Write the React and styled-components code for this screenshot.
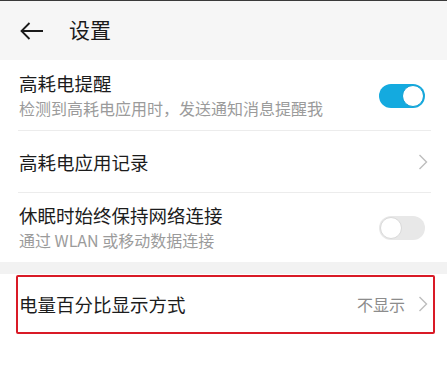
import React from 'react';
import styled, { createGlobalStyle } from 'styled-components';

const GlobalStyle = createGlobalStyle`
  html, body {
    margin: 0;
    padding: 0;
    background: #ffffff;
  }

  body {
    font-family: 'Noto Sans CJK SC', 'Noto Sans', sans-serif;
    -webkit-font-smoothing: antialiased;
  }
`;

const StyledPage = styled.div`
  position: relative;
  width: 447px;
  height: 382px;
  overflow: hidden;
  background: #ffffff;
  border-top: 1px solid #3a3a3a;
  box-sizing: border-box;
`;

const StyledHeader = styled.header`
  display: flex;
  align-items: center;
  height: 59px;
  padding-left: 20px;
  gap: 25px;
  background: #f6f6f6;

  h1 {
    margin: 0;
    font-size: 21px;
    font-weight: 400;
    color: #1a1a1a;
    line-height: 1;
    padding-bottom: 2px;
  }
`;

const StyledRow = styled.div`
  display: flex;
  align-items: center;
  justify-content: space-between;
  height: ${props => props.height}px;
  padding: 0 19px 0 19px;
  box-sizing: border-box;
  position: relative;

  &::after {
    content: '';
    display: ${props => (props.divider ? 'block' : 'none')};
    position: absolute;
    left: 18px;
    right: 16px;
    bottom: 0;
    height: 1px;
    background: #ececec;
  }
`;

const StyledText = styled.div`
  display: flex;
  flex-direction: column;
  gap: 5px;

  .title {
    font-size: 18.5px;
    line-height: 21px;
    color: #1c1c1c;
  }

  .sub {
    font-size: 16px;
    line-height: 19px;
    color: #9b9b9b;
  }
`;

const StyledSide = styled.div`
  display: flex;
  align-items: center;
  gap: 13px;
  font-size: 16px;
  color: #8c8c8c;
`;

const StyledToggle = styled.div`
  position: relative;
  width: 46px;
  height: 24px;
  margin-right: 3px;
  border-radius: 12px;
  background: ${props => (props.on ? '#14aadf' : '#e8e8e8')};

  &::after {
    content: '';
    position: absolute;
    top: 1px;
    left: ${props => (props.on ? '23px' : '1px')};
    width: 20px;
    height: 20px;
    border-radius: 50%;
    background: #ffffff;
    border: 1px solid ${props => (props.on ? '#0f9fd2' : '#d9d9d9')};
  }
`;

const StyledGap = styled.div`
  height: 12px;
  background: #f2f2f2;
`;

const StyledMark = styled.div`
  position: absolute;
  left: 16px;
  top: 274px;
  width: 419px;
  height: 59px;
  border: 2px solid #d91a26;
  border-radius: 2px;
  box-sizing: border-box;
  pointer-events: none;
`;

const Chevron = () => (
  <svg width="10" height="16" viewBox="0 0 10 16">
    <path d="M1.5 1 L8.5 8 L1.5 15" fill="none" stroke="#bdbdbd" strokeWidth="1.4" />
  </svg>
);

const BackArrow = () => (
  <svg width="24" height="18" viewBox="0 0 24 18">
    <path d="M23 9 H1.5 M9.5 1 L1.5 9 L9.5 17" fill="none" stroke="#1a1a1a" strokeWidth="1.8" />
  </svg>
);

const App = () => (
  <>
    <GlobalStyle />
    <StyledPage>
      <StyledHeader>
        <BackArrow />
        <h1>设置</h1>
      </StyledHeader>

      <StyledRow height={71} divider>
        <StyledText>
          <span className="title">高耗电提醒</span>
          <span className="sub">检测到高耗电应用时，发送通知消息提醒我</span>
        </StyledText>
        <StyledToggle on />
      </StyledRow>

      <StyledRow height={62} divider>
        <StyledText>
          <span className="title">高耗电应用记录</span>
        </StyledText>
        <Chevron />
      </StyledRow>

      <StyledRow height={69}>
        <StyledText>
          <span className="title">休眠时始终保持网络连接</span>
          <span className="sub">通过 WLAN 或移动数据连接</span>
        </StyledText>
        <StyledToggle />
      </StyledRow>

      <StyledGap />

      <StyledRow height={60}>
        <StyledText>
          <span className="title">电量百分比显示方式</span>
        </StyledText>
        <StyledSide>
          不显示
          <Chevron />
        </StyledSide>
      </StyledRow>

      <StyledMark />
    </StyledPage>
  </>
);

export default App;
